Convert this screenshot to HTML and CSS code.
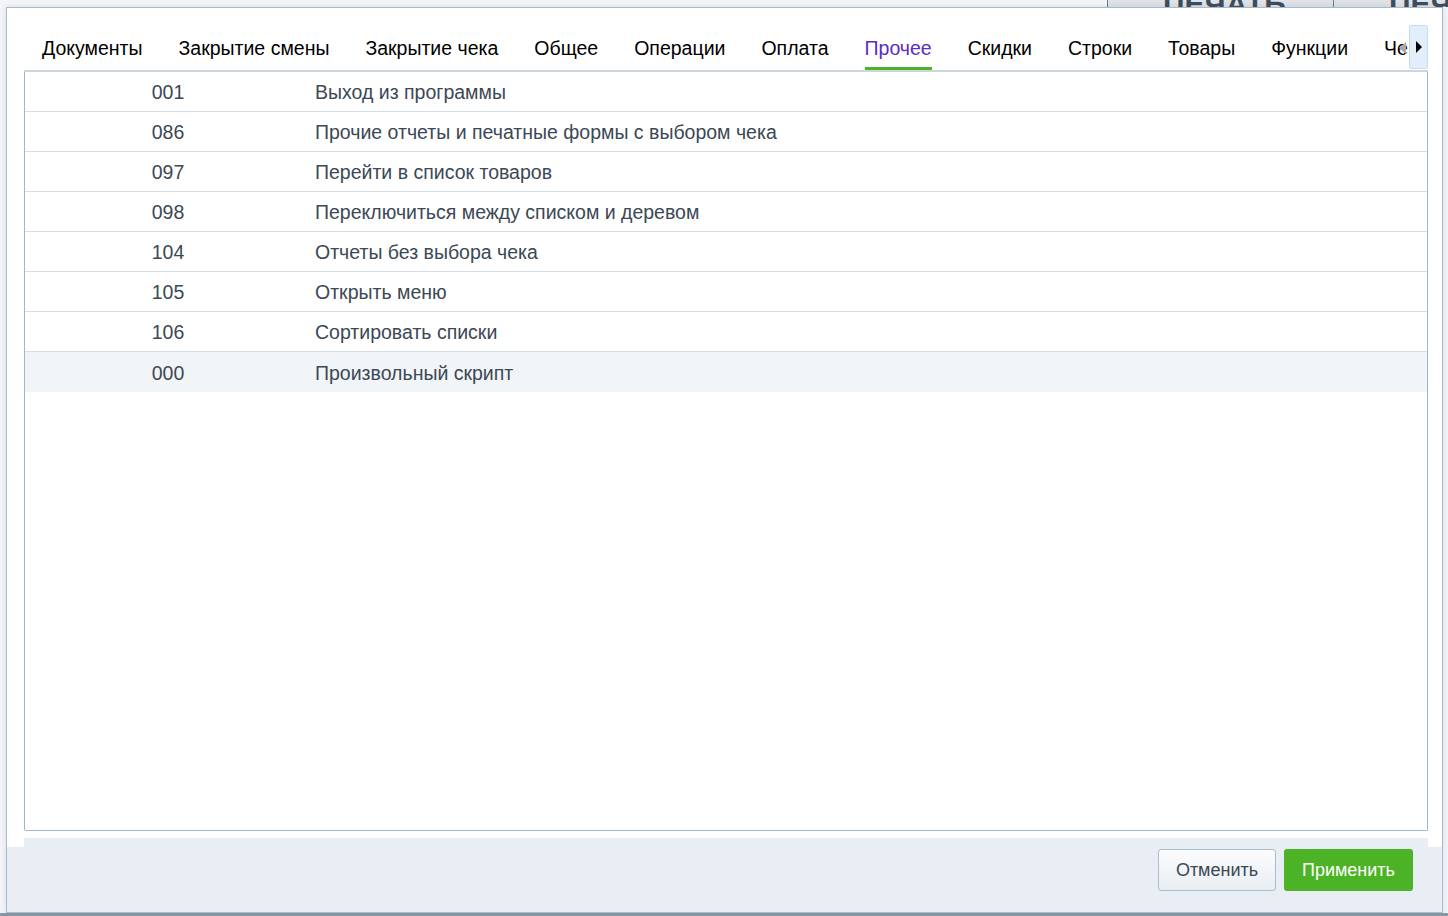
FILE: index.html
```html
<!DOCTYPE html>
<html lang="ru">
<head>
  <meta charset="UTF-8">
  <title>Настройка клавиш</title>
  <link rel="stylesheet" href="styles.css">
</head>
<body>
  <!-- page behind the dialog -->
  <div class="page">
    <div class="page-top">
      <div class="page-btn">ПЕЧАТЬ</div>
      <div class="page-btn">ПЕЧ</div>
    </div>
    <div class="page-bottom"></div>
  </div>

  <div class="modal">
    <div class="modal-body">
      <div class="tabs">
        <div class="tab-list">
          <span class="tab">Документы</span>
          <span class="tab">Закрытие смены</span>
          <span class="tab">Закрытие чека</span>
          <span class="tab">Общее</span>
          <span class="tab">Операции</span>
          <span class="tab">Оплата</span>
          <span class="tab active">Прочее</span>
          <span class="tab">Скидки</span>
          <span class="tab">Строки</span>
          <span class="tab">Товары</span>
          <span class="tab">Функции</span>
          <span class="tab">Чек</span>
        </div>
        <span class="scroll-left"></span>
        <button class="scroll-right"><span></span></button>
      </div>

      <div class="grid">
        <div class="row"><div class="code">001</div><div class="name">Выход из программы</div></div>
        <div class="row"><div class="code">086</div><div class="name">Прочие отчеты и печатные формы с выбором чека</div></div>
        <div class="row"><div class="code">097</div><div class="name">Перейти в список товаров</div></div>
        <div class="row"><div class="code">098</div><div class="name">Переключиться между списком и деревом</div></div>
        <div class="row"><div class="code">104</div><div class="name">Отчеты без выбора чека</div></div>
        <div class="row"><div class="code">105</div><div class="name">Открыть меню</div></div>
        <div class="row"><div class="code">106</div><div class="name">Сортировать списки</div></div>
        <div class="row selected"><div class="code">000</div><div class="name">Произвольный скрипт</div></div>
      </div>
    </div>

    <div class="modal-foot">
      <button class="btn btn-cancel">Отменить</button>
      <button class="btn btn-apply">Применить</button>
    </div>
  </div>
</body>
</html>
```

FILE: styles.css
```css
html, body {
  margin: 0;
  height: 100%;
}
body {
  font-family: "Liberation Sans", Arial, sans-serif;
  background: #f3f5f8;
  overflow: hidden;
}
.page {
  height: 100%;
  display: flex;
  flex-direction: column;
  justify-content: space-between;
}
.page-top {
  height: 7px;
  overflow: hidden;
  display: flex;
  justify-content: flex-end;
}
.page-btn {
  width: 226px;
  height: 7px;
  border-left: 1px solid #6f7c88;
  background: #dfe3e8;
  color: #3f4d5a;
  font-size: 30px;
  font-weight: bold;
  line-height: 7px;
  padding-left: 55px;
  box-sizing: border-box;
}
.page-btn:last-child {
  width: 115px;
}
.page-bottom {
  height: 3px;
  background: #8c99a5;
}

/* dialog */
.modal {
  position: absolute;
  left: 6px;
  top: 7px;
  width: 1437px;
  height: 906px;
  box-sizing: border-box;
  border: 1px solid #a5bccd;
  background: #fff;
  display: flex;
  flex-direction: column;
  box-shadow: 0 0 6px rgba(60,80,100,0.15);
}
.modal-body {
  flex: 1;
  display: flex;
  flex-direction: column;
  padding: 17px 14px 0 17px;
  min-height: 0;
}
.tabs {
  position: relative;
  height: 45px;
  border-bottom: 2px solid #cdd5dd;
  display: flex;
}
.tab-list {
  flex: 1;
  display: flex;
  overflow: hidden;
  white-space: nowrap;
  padding-left: 18px;
}
.tab {
  margin-right: 36px;
  height: 45px;
  box-sizing: border-box;
  padding-top: 12px;
  font-size: 19.5px;
  color: #000;
  border-bottom: 3px solid transparent;
}
.tab.active {
  color: #5a2bc6;
  border-bottom-color: #4cb327;
}
.scroll-left {
  position: absolute;
  right: 22px;
  top: 17px;
  width: 0;
  height: 0;
  border-top: 6px solid transparent;
  border-bottom: 6px solid transparent;
  border-right: 7px solid #a9a9a9;
}
.scroll-right {
  width: 19px;
  height: 44px;
  margin: 0;
  padding: 0;
  border: 1px solid #c9dcee;
  border-radius: 2px;
  background: #e2eefb;
  display: flex;
  align-items: center;
  justify-content: center;
}
.scroll-right span {
  width: 0;
  height: 0;
  border-top: 6px solid transparent;
  border-bottom: 6px solid transparent;
  border-left: 6px solid #000;
}

.grid {
  flex: 1;
  border: 1px solid #9fb7c8;
  border-top: none;
  border-radius: 0 0 2px 2px;
}
.row {
  display: flex;
  height: 40px;
  box-sizing: border-box;
  padding-top: 2px;
  align-items: center;
  border-bottom: 1px solid #d6dee6;
  font-size: 19.5px;
  color: #3b4855;
}
.row.selected {
  background: #f2f5f8;
  border-bottom: none;
}
.code {
  width: 286px;
  text-align: center;
}
.name {
  padding-left: 4px;
}

.modal-foot {
  margin-top: 7px;
  height: 74px;
  box-sizing: border-box;
  padding: 11px 29px 0 0;
  display: flex;
  justify-content: flex-end;
  gap: 8px;
  background:
    linear-gradient(#e9eef5, #e9eef5) 17px 0 / calc(100% - 31px) 9px no-repeat,
    linear-gradient(#e9eef5, #e9eef5) 0 9px / 100% 100% no-repeat,
    #fff;
}
.btn {
  height: 42px;
  padding: 0 10px;
  font-family: "Liberation Sans", Arial, sans-serif;
  font-size: 18px;
  border-radius: 3px;
  cursor: pointer;
}
.btn-cancel {
  width: 118px;
  border: 1px solid #a9bdcc;
  background: linear-gradient(#fbfcfd, #e9eef3);
  color: #3b4855;
}
.btn-apply {
  width: 129px;
  border: none;
  background: #4db326;
  color: #fff;
}
```
